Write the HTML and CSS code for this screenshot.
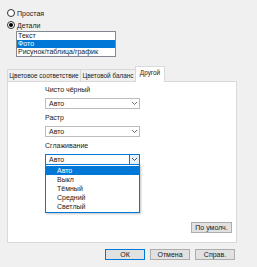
FILE: index.html
```html
<!DOCTYPE html>
<html>
<head>
  <meta charset="UTF-8">
  <title>Параметры</title>
  <link rel="stylesheet" href="styles.css">
</head>
<body>
  <div class="dialog">
    <div class="radios">
      <div class="radio"><span class="dot"></span>Простая</div>
      <div class="radio"><span class="dot checked"></span>Детали</div>
    </div>
    <ul class="listbox">
      <li>Текст</li>
      <li class="sel">Фото</li>
      <li>Рисунок/таблица/график</li>
    </ul>

    <div class="tabs">
      <div class="tab tab-wide">Цветовое соответствие</div>
      <div class="tab tab-mid">Цветовой баланс</div>
      <div class="tab active">Другой</div>
    </div>
    <div class="panel">
      <div class="field">
        <div class="label">Чисто чёрный</div>
        <div class="combo">
          <span>Авто</span>
          <span class="arrow"><svg width="7" height="5" viewBox="0 0 7 5"><polyline points="1,1 3.5,3.5 6,1" fill="none" stroke="#606060" stroke-width="0.9"/></svg></span>
        </div>
      </div>
      <div class="field">
        <div class="label">Растр</div>
        <div class="combo">
          <span>Авто</span>
          <span class="arrow"><svg width="7" height="5" viewBox="0 0 7 5"><polyline points="1,1 3.5,3.5 6,1" fill="none" stroke="#606060" stroke-width="0.9"/></svg></span>
        </div>
      </div>
      <div class="field">
        <div class="label">Сглаживание</div>
        <div class="combo open">
          <span>Авто</span>
          <span class="arrow"><svg width="7" height="5" viewBox="0 0 7 5"><polyline points="1,1 3.5,3.5 6,1" fill="none" stroke="#404040" stroke-width="0.9"/></svg></span>
          <ul class="dropdown">
            <li class="sel">Авто</li>
            <li>Выкл</li>
            <li>Тёмный</li>
            <li>Средний</li>
            <li>Светлый</li>
          </ul>
        </div>
      </div>
      <div class="panel-foot">
        <button class="btn">По умолч.</button>
      </div>
    </div>

    <div class="buttons">
      <button class="btn default">ОК</button>
      <button class="btn">Отмена</button>
      <button class="btn">Справ.</button>
    </div>
  </div>
</body>
</html>
```

FILE: styles.css
```css
body {
  margin: 0;
  background-color: #F0F0F0;
  font-family: "Liberation Sans", Arial, sans-serif;
  font-size: 7px;
  color: #1A1A1A;
}

.dialog {
  width: 257px;
  height: 267px;
  padding-top: 7px;
  box-sizing: border-box;
}

/* radio buttons */
.radio {
  display: flex;
  align-items: center;
  height: 12px;
  padding-left: 7px;
}

.dot {
  width: 8px;
  height: 8px;
  box-sizing: border-box;
  border: 1px solid #333333;
  border-radius: 50%;
  background: #FFFFFF;
  margin-right: 2px;
  display: flex;
  align-items: center;
  justify-content: center;
}

.dot.checked::after {
  content: "";
  width: 4px;
  height: 4px;
  border-radius: 50%;
  background: #000000;
}

/* list */
.listbox {
  list-style: none;
  margin: 0 0 0 16px;
  padding: 0;
  width: 100px;
  box-sizing: border-box;
  border: 1px solid #828790;
  background: #FFFFFF;
}

.listbox li {
  height: 8px;
  line-height: 8px;
  padding-left: 1px;
}

.listbox li.sel {
  background: #0078D7;
  color: #FFFFFF;
}

/* tabs */
.tabs {
  display: flex;
  align-items: flex-end;
  margin: 9px 0 0 7px;
  height: 15px;
  position: relative;
  z-index: 1;
}

.tab {
  height: 12px;
  line-height: 11px;
  border: 1px solid #D9D9D9;
  border-bottom: none;
  box-sizing: border-box;
  margin-right: -1px;
  background: #F0F0F0;
  white-space: nowrap;
  text-align: center;
  font-size: 6.4px;
}

.tab-wide {
  width: 74px;
}

.tab-mid {
  width: 56px;
}

.tab.active {
  width: 30px;
  line-height: 12px;
  background: #FFFFFF;
  margin-bottom: -1px;
  height: 16px;
}

.panel {
  margin-left: 7px;
  width: 230px;
  height: 162px;
  box-sizing: border-box;
  border: 1px solid #D9D9D9;
  background: #FFFFFF;
  padding: 2px 4px 9px 37px;
  display: flex;
  flex-direction: column;
}

.field {
  width: 95px;
  margin-bottom: 3px;
}

.label {
  height: 11px;
  line-height: 11px;
  margin-bottom: 3px;
}

.combo {
  position: relative;
  height: 11px;
  box-sizing: border-box;
  border: 1px solid #BCBCBC;
  background: #FFFFFF;
  display: flex;
  align-items: center;
  justify-content: space-between;
  padding-left: 3px;
}

.arrow {
  width: 9px;
  height: 100%;
  display: flex;
  align-items: center;
  justify-content: center;
}

.combo.open {
  border-color: #0078D7;
}

.combo.open .arrow {
  background: #E5F1FB;
  border-left: 1px solid #0078D7;
}

.dropdown {
  position: absolute;
  top: 100%;
  left: -1px;
  right: -1px;
  list-style: none;
  margin: 0;
  padding: 1px 0;
  border: 1px solid #0078D7;
  background: #FFFFFF;
  box-shadow: 1px 1px 2px rgba(0, 0, 0, 0.25);
  z-index: 2;
}

.dropdown li {
  height: 9px;
  line-height: 9px;
  padding-left: 11px;
}

.dropdown li.sel {
  background: #0078D7;
  color: #FFFFFF;
}

.panel-foot {
  margin-top: auto;
  display: flex;
  justify-content: flex-end;
}

/* buttons */
.btn {
  font-family: inherit;
  font-size: 7px;
  height: 11px;
  width: 40px;
  padding: 0;
  line-height: 9px;
  background: #E1E1E1;
  border: 1px solid #ADADAD;
  color: #1A1A1A;
}

.panel-foot .btn {
  width: 41px;
}

.btn.default {
  border-color: #0078D7;
}

.buttons {
  display: flex;
  justify-content: flex-end;
  gap: 5px;
  margin-top: 6px;
  padding-right: 22px;
}
```
